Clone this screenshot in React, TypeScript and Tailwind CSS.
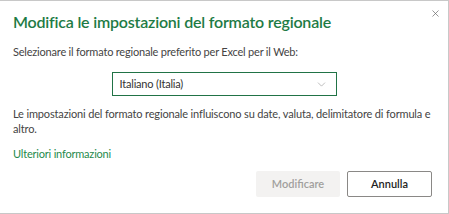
import { X, ChevronDown } from 'lucide-react'

export default function App() {
  return (
    <div
      className="w-[449px] h-[214px] bg-white border-t border-r border-b border-[#c8c8c8] text-[#333] relative"
      style={{ fontFamily: 'Lato, "Noto Sans", sans-serif' }}
    >
      <button className="absolute right-[3px] top-[2px] w-5 h-5 flex items-center justify-center text-[#666]">
        <X size={11} strokeWidth={1.5} />
      </button>

      <div className="px-[13px] pt-[8px]">
        <h1 className="text-[16px] leading-[26px] tracking-[-0.2px] font-semibold text-[#1e7b45]">
          Modifica le impostazioni del formato regionale
        </h1>

        <p className="mt-[9px] text-[11px] leading-[16px] tracking-[-0.2px] text-[#444]">
          Selezionare il formato regionale preferito per Excel per il Web:
        </p>

        <div className="mt-[12px] flex justify-center">
          <div className="w-[225px] h-[24px] border-[1.5px] border-[#217346] flex items-center justify-between pl-[7px] pr-[8px]">
            <span className="text-[11px] tracking-[-0.2px] text-[#333]">Italiano (Italia)</span>
            <ChevronDown size={13} strokeWidth={1} className="text-[#888]" />
          </div>
        </div>

        <p className="mt-[10px] text-[11px] leading-[15px] tracking-[-0.15px] text-[#444]">
          Le impostazioni del formato regionale influiscono su date, valuta, delimitatore di formula e altro.
        </p>

        <a className="block mt-[10px] text-[11px] leading-[15px] tracking-[-0.2px] text-[#1f8a4c]">Ulteriori informazioni</a>

        <div className="mt-[10px] flex justify-end gap-[7px] pr-[3px]">
          <button className="w-[84px] h-[26px] rounded-[2px] bg-[#f3f2f1] text-[#a19f9d] text-[11px] font-semibold">
            Modificare
          </button>
          <button className="w-[85px] h-[26px] rounded-[2px] border border-[#8a8886] bg-white text-[#222] text-[11px] font-semibold">
            Annulla
          </button>
        </div>
      </div>
    </div>
  )
}
